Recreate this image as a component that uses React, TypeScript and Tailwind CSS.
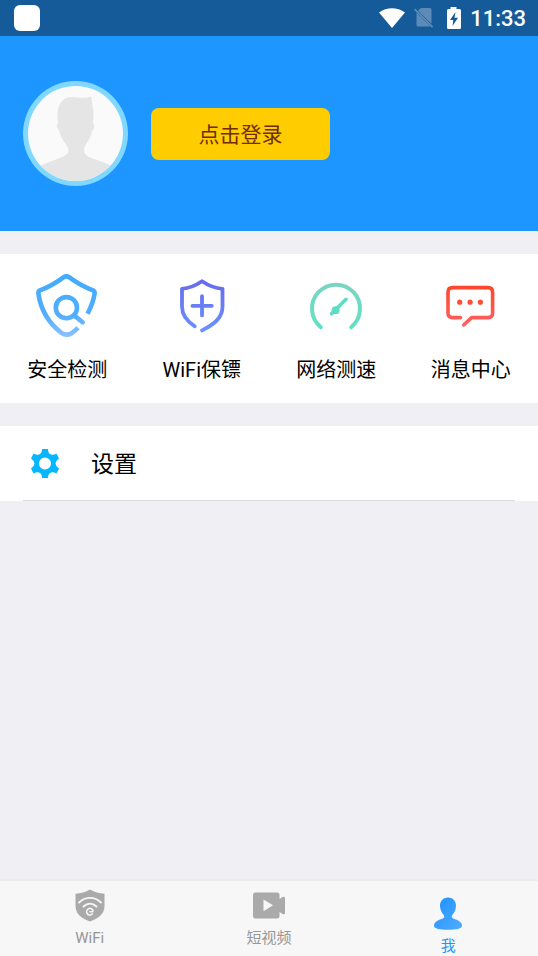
import type { ReactNode } from "react";

const ShieldSearch = () => (
  <svg viewBox="0 0 72 72" className="size-[72px]" fill="none" strokeWidth="4.6" strokeLinecap="round" strokeLinejoin="round" aria-hidden="true">
    <defs>
      <linearGradient id="search" gradientUnits="userSpaceOnUse" x1="0" y1="4" x2="0" y2="67">
        <stop offset="0" stopColor="#42abfd" />
        <stop offset="0.65" stopColor="#50aeff" />
        <stop offset="1" stopColor="#8bc2ff" />
      </linearGradient>
    </defs>
    <g stroke="url(#search)">
      <path strokeLinecap="butt" d="M56.6 43.8C60 37 62.6 30 63.6 23.6Q63.9 21.4 62 20.4C54 17.5 46 13 38 7.2Q35.4 5.4 32.8 7.2C25 13 17 17.5 9 20.4Q7.1 21.4 7.4 23.6C9.5 38 16.5 52 30 62.6Q35.4 66.4 40.6 63.2Q44 61 47 57.8" />
      <circle cx="35.4" cy="37.7" r="10.6" />
      <path d="M43 45.4L51.6 52.2" />
    </g>
  </svg>
);

const ShieldPlus = () => (
  <svg viewBox="0 0 72 72" className="size-[72px]" fill="none" strokeWidth="3.8" strokeLinecap="round" strokeLinejoin="round" aria-hidden="true">
    <defs>
      <linearGradient id="plus" gradientUnits="userSpaceOnUse" x1="0" y1="10" x2="0" y2="62">
        <stop offset="0" stopColor="#676be9" />
        <stop offset="1" stopColor="#6b91ff" />
      </linearGradient>
    </defs>
    <g stroke="url(#plus)">
      <path d="M28.8 56.3C20.5 51 16 44.5 16 36.5V18.8C23 18.2 29.5 15.6 36 11.2C42.5 15.6 49.3 18.2 56.5 18.8V36.5C56.5 47.5 49 53.8 36 60.4" />
      <path d="M36 26.2V45.4M26.4 35.8H45.8" />
    </g>
  </svg>
);

const Gauge = () => (
  <svg viewBox="0 0 72 72" className="size-[72px]" fill="none" strokeLinecap="round" aria-hidden="true">
    <defs>
      <linearGradient id="gauge" gradientUnits="userSpaceOnUse" x1="0" y1="12" x2="0" y2="60">
        <stop offset="0" stopColor="#7bd5c1" />
        <stop offset="1" stopColor="#60e0c6" />
      </linearGradient>
    </defs>
    <path stroke="url(#gauge)" strokeWidth="4" d="M20.8 57.2A24 24 0 1 1 51.2 57.2" />
    <path stroke="#60dcc6" strokeWidth="3.6" d="M46 29.3L31.6 43.8" />
    <circle cx="35.6" cy="40.2" r="4" fill="#60dcc6" />
  </svg>
);

const Message = () => (
  <svg viewBox="0 0 72 72" className="size-[72px]" fill="none" strokeWidth="3.6" strokeLinecap="round" strokeLinejoin="round" aria-hidden="true">
    <defs>
      <linearGradient id="message" gradientUnits="userSpaceOnUse" x1="0" y1="15" x2="0" y2="56">
        <stop offset="0" stopColor="#ff4528" />
        <stop offset="1" stopColor="#ff6264" />
      </linearGradient>
    </defs>
    <path stroke="url(#message)" d="M25.500 47.600H17.600Q13 47.600 13 43V22.200Q13 17.600 17.600 17.600H53Q57.600 17.600 57.600 22.200V43Q57.600 47.600 53 47.600H36.600L28.700 55" />
    <g fill="#ff5138">
      <circle cx="24.700" cy="32.200" r="2.600" />
      <circle cx="35.100" cy="32.200" r="2.600" />
      <circle cx="45.400" cy="32.200" r="2.600" />
    </g>
  </svg>
);

const services: { label: string; icon: ReactNode }[] = [
  { label: "安全检测", icon: <ShieldSearch /> },
  { label: "WiFi保镖", icon: <ShieldPlus /> },
  { label: "网络测速", icon: <Gauge /> },
  { label: "消息中心", icon: <Message /> },
];

function StatusBar() {
  return (
    <div className="flex h-9 shrink-0 items-center justify-between bg-[#155a99] pr-3 pl-3.5 text-white">
      <span className="size-[26px] rounded-md bg-white" />
      <div className="flex items-center">
        <svg viewBox="0 0 26 20" className="mr-[9px] h-5 w-[26px]" fill="white" aria-hidden="true">
          <path d="M0 4.500C7.500-1.300 18.500-1.300 26 4.500L13 20Z" />
        </svg>
        <svg viewBox="0 0 20 20" className="mr-3 size-5" aria-hidden="true">
          <path fill="#5c8bb7" d="M7 0H16Q17.500 0 17.500 1.500V15.800L4 2.800ZM2.500 4.500L16.500 18.500H4Q2.500 18.500 2.500 17Z" />
          <path stroke="#5c8bb7" strokeWidth="1.800" d="M.6 1.200L18.600 19.200" />
        </svg>
        <svg viewBox="0 0 16 22" className="mr-2 h-[22px] w-4" aria-hidden="true">
          <path fill="white" d="M4.500 0H10.500V2H13.500Q15 2 15 3.500V20.500Q15 22 13.500 22H2.500Q1 22 1 20.500V3.500Q1 2 2.500 2H4.500Z" />
          <path fill="#155a99" d="M9.500 5L4 13H7.300L6.500 19L12 10.800H8.500Z" />
        </svg>
        <time className="pt-0.5 text-[22px] leading-8 font-medium">11:33</time>
      </div>
    </div>
  );
}

function Avatar() {
  return (
    <svg viewBox="0 0 105 105" className="size-[105px] shrink-0" role="img" aria-label="头像">
      <defs>
        <clipPath id="face">
          <circle cx="52.500" cy="52.500" r="47.500" />
        </clipPath>
      </defs>
      <circle cx="52.500" cy="52.500" r="52.500" fill="#80d8ff" />
      <circle cx="52.500" cy="52.500" r="47.500" fill="#fafafa" />
      <path
        clipPath="url(#face)"
        fill="#e5e5e5"
        d="M12 89C19 82 30 80 38 76.500C46 73.500 47 70 44 65C39 58 37 54 36 49C33.500 47 33.500 44 35 42C33 29 36 21 43 17C50 14 59 19 68 15.500C69 18 68.500 21 69.500 25C71 31 70.500 37 70 42C72 45 71 48 69 50C68 56 65 60 62 65C60 70 61 74 67 76.500C76 80 86 82 94 89V105H12Z"
      />
    </svg>
  );
}

function TabBar() {
  const tab = "flex flex-col items-center text-[15px] leading-5";
  return (
    <nav className="grid h-[77px] shrink-0 grid-cols-3 border-t-2 border-[#ececee] bg-[#f7f7f7] text-[#969696]">
      <button type="button" className={`${tab} pt-2`}>
        <svg viewBox="0 0 30 33" className="mb-[6px] h-[33px] w-[30px]" fill="none" aria-hidden="true">
          <path fill="#aaa" d="M15 .5C19.500 3 24 4.300 29.500 4.700V17C29.500 25 23 29.500 15 32.500C7 29.500 .5 25 .5 17V4.700C6 4.300 10.500 3 15 .5Z" />
          <g stroke="#f7f7f7" strokeWidth="1.900" strokeLinecap="round">
            <path d="M4 13.500C10.500 7.300 19.500 7.300 26 13.500M8.500 17.500C12.500 13.700 17.500 13.700 21.500 17.500" />
            <path strokeWidth="1.600" d="M17.300 25A3.300 3.300 0 1 1 18 21.500M15 22.800H17.800" />
          </g>
        </svg>
        WiFi
      </button>
      <button type="button" className={`${tab} pt-[11px]`}>
        <svg viewBox="0 0 32 27" className="mb-[9px] h-[27px] w-8" aria-hidden="true">
          <path fill="#aaa" d="M2.500 .5H24Q26.500 .5 26.500 3V7L29.500 5Q32 4 32 6V21Q32 23 29.500 22L26.500 20V24Q26.500 26.500 24 26.500H2.500Q0 26.500 0 24V3Q0 .5 2.500 .5Z" />
          <path fill="#f7f7f7" d="M10.500 7.500L20 13.300L10.500 19.300Z" />
        </svg>
        短视频
      </button>
      <button type="button" aria-current="page" className={`${tab} pt-4 text-[#2196ff]`}>
        <svg viewBox="0 0 28 33" className="mb-[6px] h-[33px] w-7" aria-hidden="true">
          <defs>
            <linearGradient id="person" x1="0" y1="0" x2="1" y2="1">
              <stop offset="0" stopColor="#1e90ff" />
              <stop offset="1" stopColor="#50adff" />
            </linearGradient>
          </defs>
          <path fill="url(#person)" d="M14 .5C19 .5 22 4 22 9C22 13 20 16 18 18.500C17 21 19 21.500 22 22.500C26 24 28 26 28 28.500C28 32 22 32.700 14 32.700S0 32 0 28.500C0 26 2 24 6 22.500C9 21.500 11 21 10 18.500C8 16 6 13 6 9C6 4 9 .5 14 .5Z" />
        </svg>
        我
      </button>
    </nav>
  );
}

export default function App() {
  return (
    <div className="flex min-h-screen flex-col bg-[#efeff4] font-[Roboto,'Noto_Sans_CJK_SC',sans-serif] text-black">
      <StatusBar />
      <header className="flex h-[195px] shrink-0 items-center gap-[23px] bg-[#1e96ff] px-[23px]">
        <Avatar />
        <button type="button" className="h-[52px] w-[179px] rounded-lg bg-[#ffcc00] pt-1 text-[21px] text-[#702c08]">
          点击登录
        </button>
      </header>
      <main className="flex grow flex-col gap-[23px] pt-[23px]">
        <section className="grid grid-cols-4 bg-white">
          {services.map(({ label, icon }) => (
            <button key={label} type="button" className="flex flex-col items-center gap-[13px] pt-4 pb-[18px] text-[20px] leading-[30px]">
              {icon}
              {label}
            </button>
          ))}
        </section>
        <section className="bg-white px-[23px]">
          <button type="button" className="flex h-[75px] w-full items-center border-b border-[#dcdcde] pl-2 text-[23px]">
            <svg viewBox="-14 -14.500 28 29" className="mr-8 h-[29px] w-7" fill="#06b7ff" aria-hidden="true">
              <path
                fillRule="evenodd"
                d="M-3-14.500H3Q3-10 6-9Q8-8 11.500-10L14-5Q10.500-2.500 10.500 0T14 5L11.500 10Q8 8 6 9Q3 10 3 14.500H-3Q-3 10-6 9Q-8 8-11.500 10L-14 5Q-10.500 2.500-10.500 0T-14-5L-11.500-10Q-8-8-6-9Q-3-10-3-14.500ZM0-6A6 6 0 1 0 0 6A6 6 0 1 0 0-6Z"
              />
            </svg>
            <span className="pt-1">设置</span>
          </button>
        </section>
      </main>
      <TabBar />
    </div>
  );
}
